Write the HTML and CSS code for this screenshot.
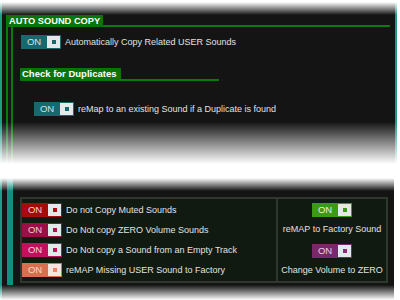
FILE: index.html
```html
<!DOCTYPE html>
<html>
<head>
<meta charset="utf-8">
<link rel="stylesheet" href="styles.css">
</head>
<body>
<section class="top">
  <div class="group">
    <div class="ghead">
      <span class="gtitle">AUTO SOUND COPY</span>
      <span class="gline"></span>
    </div>
    <div class="gbody">
      <div class="inner">
        <div class="row r1">
          <span class="tg teal"><span class="on">ON</span><span class="sq"><i></i></span></span>
          <span class="lbl">Automatically Copy Related USER Sounds</span>
        </div>
        <div class="ghead sub">
          <span class="gtitle">Check for Duplicates</span>
          <span class="gline"></span>
        </div>
        <div class="row r2">
          <span class="tg teal"><span class="on">ON</span><span class="sq"><i></i></span></span>
          <span class="lbl">reMap to an existing Sound if a Duplicate is found</span>
        </div>
      </div>
    </div>
  </div>
</section>
<section class="bottom">
  <div class="bar"></div>
  <div class="panel">
    <div class="pleft">
      <div class="row">
        <span class="tg red"><span class="on">ON</span><span class="sq"><i></i></span></span>
        <span class="lbl">Do not Copy Muted Sounds</span>
      </div>
      <div class="row">
        <span class="tg crimson"><span class="on">ON</span><span class="sq"><i></i></span></span>
        <span class="lbl">Do Not copy ZERO Volume Sounds</span>
      </div>
      <div class="row">
        <span class="tg pink"><span class="on">ON</span><span class="sq"><i></i></span></span>
        <span class="lbl">Do Not copy a Sound from an Empty Track</span>
      </div>
      <div class="row">
        <span class="tg salmon"><span class="on">ON</span><span class="sq"><i></i></span></span>
        <span class="lbl">reMAP Missing USER Sound to Factory</span>
      </div>
    </div>
    <div class="pright">
      <span class="tg green"><span class="on">ON</span><span class="sq"><i></i></span></span>
      <span class="clbl">reMAP to Factory Sound</span>
      <span class="tg purple t2"><span class="on">ON</span><span class="sq"><i></i></span></span>
      <span class="clbl">Change Volume to ZERO</span>
    </div>
  </div>
</section>
</body>
</html>
```
FILE: styles.css
```css
* { box-sizing: border-box; margin: 0; padding: 0; }
html, body { width: 400px; height: 300px; overflow: hidden; background: #fff; }
body {
  font-family: "Liberation Sans", Arial, sans-serif;
  font-size: 9px;
  color: #e2e2e2;
}

/* ---------- top section ---------- */
.top {
  position: relative;
  width: 397px;
  height: 176px;
  background: #141414;
  border-left: 2px solid #1c9c86;
  border-right: 2px solid #1c9c86;
  padding: 15px 0 0 4px;
}
.top::before {
  content: "";
  position: absolute;
  left: -2px; right: -2px; top: 0;
  height: 15px;
  background: linear-gradient(#fff 0, #fff 2px, rgba(255,255,255,0) 15px);
}
.top::after {
  content: "";
  position: absolute;
  left: -2px; right: -2px; top: 122px; bottom: 0;
  background: linear-gradient(rgba(255,255,255,0) 0, #fff 42px, #fff 100%);
}
.group { width: 384px; height: 161px; display: flex; flex-direction: column; }
.ghead { display: flex; height: 12px; }
.gtitle {
  background: #0a740a;
  color: #fff;
  font-weight: bold;
  font-size: 9.3px;
  line-height: 12px;
  padding: 0 3px;
  white-space: nowrap;
}
.gline { flex: 1; border-bottom: 2px solid #0a7a0a; }
.gbody { flex: 1; border-left: 2px solid #0a7a0a; padding-left: 3px; }
.inner { height: 100%; border-left: 2px solid #0a7a0a; padding: 8px 0 0 7px; }

.row { display: flex; align-items: center; height: 14px; white-space: nowrap; }
.lbl { margin-left: 4px; }
.r1 { margin-left: 1px; }
.sub { margin-top: 19px; height: 13px; width: 199px; }
.sub .gtitle { font-size: 9.5px; line-height: 11px; padding: 0 4px 2px 2px; }
.r2 { margin-top: 21px; margin-left: 14px; }

/* ---------- toggles ---------- */
.tg {
  display: flex;
  align-items: center;
  width: 40px;
  height: 14px;
  padding-right: 1px;
  flex: none;
}
.tg .on { flex: 1; text-align: center; font-size: 9.5px; line-height: 14px; }
.tg .sq {
  width: 13px; height: 12px;
  background: #e4e8e8;
  display: flex; align-items: center; justify-content: center;
}
.tg .sq i { display: block; width: 4px; height: 4px; }

.teal { background: #17696e; color: #cfe2e2; }
.teal .sq i { background: #17696e; }
.red { background: #a40c0c; color: #f2cccc; }
.red .sq i { background: #b00c14; }
.crimson { background: #9c0e46; color: #f0c8d6; }
.crimson .sq i { background: #b0104e; }
.pink { background: #c2105c; color: #f6cde0; }
.pink .sq i { background: #c8105e; }
.salmon { background: #d8704f; color: #f8d6c8; }
.salmon .sq { background: #f4e6e0; }
.salmon .sq i { background: #f08466; }
.green { background: #3e9a16; color: #e6f2da; }
.green .sq i { background: #3e9a16; }
.purple { background: #7a2868; color: #ecc8e4; }
.purple .sq i { background: #8a2c76; }

/* ---------- bottom section ---------- */
.bottom {
  position: relative;
  width: 394px;
  height: 124px;
  background: #141414;
  border-left: 2px solid #1c9c86;
  display: flex;
  align-items: flex-start;
  padding-left: 5px;
}
.bottom::before {
  content: "";
  position: absolute;
  left: -2px; right: 0; top: 0;
  height: 16px;
  background: linear-gradient(#fff 0, #fff 2px, rgba(255,255,255,0) 15px);
}
.bottom::after {
  content: "";
  position: absolute;
  left: -2px; right: 0; top: 109px; bottom: 0;
  background: linear-gradient(rgba(255,255,255,0) 0, #fff 100%);
}
.bar { width: 6px; height: 109px; background: #128e80; flex: none; }
.panel {
  margin: 21px 0 0 7px;
  width: 368px;
  height: 86px;
  border: 2px solid #30372f;
  background: #111a10;
  display: flex;
}
.pleft {
  width: 254px;
  padding-top: 4px;
  display: flex;
  flex-direction: column;
  gap: 6px;
}
.pright {
  flex: 1;
  border-left: 2px solid #30372f;
  display: flex;
  flex-direction: column;
  align-items: center;
  padding-top: 4px;
}
.clbl { margin-top: 6px; line-height: 12px; white-space: nowrap; }
.t2 { margin-top: 9px; }
```
